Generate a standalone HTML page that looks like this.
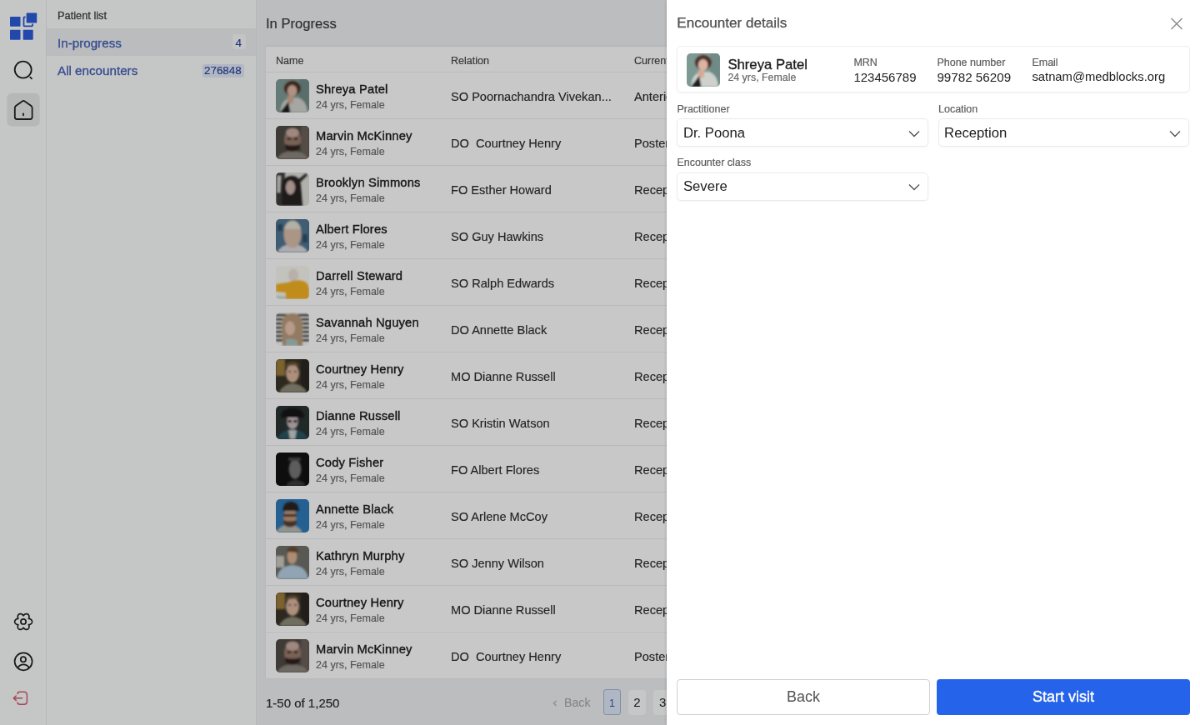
<!DOCTYPE html>
<html><head><meta charset="utf-8">
<style>
html,body{margin:0;padding:0;width:1200px;height:725px;overflow:hidden;background:#fff;}
*{box-sizing:border-box;}
#root{position:absolute;left:0;top:0;width:1440px;height:870px;transform:scale(0.8333333);will-change:transform;transform-origin:0 0;font-family:"Liberation Sans",sans-serif;color:#222;}
.abs{position:absolute;}
#rail{left:0;top:0;width:56px;height:870px;background:#f7f8f8;border-right:1px solid #e6e7e6;}
#panel{left:56px;top:0;width:252px;height:870px;background:#f7f8f8;border-right:1px solid #e6e7e7;}
#main{left:308px;top:0;width:1132px;height:870px;background:#ebedef;}
#overlay{left:0;top:0;width:1440px;height:870px;background:rgba(0,0,0,0.2);}
#modal{left:800px;top:0;width:640px;height:870px;background:#fff;box-shadow:-1px 0 3px rgba(0,0,0,0.12);}
.t{position:absolute;white-space:nowrap;line-height:1;}
.tbl{position:absolute;left:11px;top:56px;width:1200px;height:758.2px;background:#fafbfb;box-shadow:0 -1px 3px rgba(0,0,0,0.05);}
.th{position:absolute;top:0;left:0;right:0;height:30.7px;border-bottom:1px solid #e8e9e9;}
.th span{position:absolute;top:9.6px;font-size:12.5px;color:#4a4a4a;-webkit-text-stroke:0.2px #4a4a4a;}
.rows{position:absolute;top:30.7px;left:0;right:0;}
.row{position:relative;height:56px;border-bottom:1px solid #e8e9e9;}
.av{position:absolute;left:12px;top:8px;width:40px;height:40px;border-radius:5px;overflow:hidden;}
.av svg{display:block;}
.nm{position:absolute;left:60px;top:12.2px;font-size:14.7px;letter-spacing:0.2px;color:#1e1e1e;white-space:nowrap;-webkit-text-stroke:0.4px #1e1e1e;}
.sub{position:absolute;left:60px;top:32.2px;font-size:12.5px;color:#6e6e6e;white-space:nowrap;-webkit-text-stroke:0.2px #6e6e6e;}
.rel{position:absolute;left:222px;top:21.8px;font-size:14.6px;color:#2e2e2e;white-space:nowrap;-webkit-text-stroke:0.15px #2e2e2e;}
.cur{position:absolute;left:442px;top:21.8px;font-size:14.6px;color:#2e2e2e;white-space:nowrap;-webkit-text-stroke:0.15px #2e2e2e;}
.lbl{position:absolute;font-size:12.5px;color:#5e5e5e;white-space:nowrap;line-height:1;-webkit-text-stroke:0.2px #5e5e5e;}
.box{position:absolute;height:34px;border:1px solid #ececec;border-radius:5px;box-shadow:0 1px 2px rgba(0,0,0,0.04);}
.box span{position:absolute;left:6.5px;top:8.5px;font-size:16.7px;color:#222;line-height:1;}
.box svg{position:absolute;right:9px;top:11.8px;}
</style></head>
<body>
<svg width="0" height="0" style="position:absolute"><defs><filter id="bl" x="-20%" y="-20%" width="140%" height="140%"><feGaussianBlur stdDeviation="1.2"/></filter></defs></svg>
<div id="root">
  <div id="rail" class="abs">
    <svg class="abs" style="left:0;top:0" width="56" height="160" viewBox="0 0 56 160">
      <rect x="12" y="20" width="12.5" height="11.7" rx="0.8" fill="#2b5ad8"/>
      <rect x="12" y="35.8" width="12.5" height="12" rx="0.8" fill="#2b5ad8"/>
      <rect x="27.7" y="35.8" width="12" height="12" rx="0.8" fill="#2b5ad8"/>
      <rect x="28.5" y="20.5" width="10.5" height="10.8" rx="0.8" fill="none" stroke="#2b5ad8" stroke-width="1.8"/>
      <rect x="30.6" y="14.6" width="14.6" height="13.9" rx="1.2" fill="#f7f8f8"/>
      <rect x="31.6" y="15.6" width="12.6" height="11.9" rx="0.8" fill="#2b5ad8"/>
      <circle cx="27.7" cy="83.6" r="10" fill="none" stroke="#222" stroke-width="1.8"/>
      <line x1="36.2" y1="92.6" x2="38" y2="94.4" stroke="#222" stroke-width="1.8" stroke-linecap="round"/>
      <rect x="8.4" y="111.8" width="39.2" height="39.8" rx="6" fill="#e4e5e5"/>
      <path d="M17.8 129.5 L17.8 140.5 Q17.8 143 20.3 143 L36 143 Q38.6 143 38.6 140.5 L38.6 129.5 Q38.6 128 37.4 127 L29.6 121.4 Q28.2 120.5 26.8 121.4 L19 127 Q17.8 128 17.8 129.5 Z" fill="none" stroke="#222" stroke-width="1.8" stroke-linejoin="round"/>
      <line x1="28" y1="136.3" x2="28" y2="138.3" stroke="#222" stroke-width="1.8" stroke-linecap="round"/>
    </svg>
    <svg class="abs" style="left:0;top:720px" width="56" height="150" viewBox="0 720 56 150">
      <g fill="none" stroke="#222" stroke-width="1.7" stroke-linejoin="round">
        <path d="M38.50 746.00 L38.48 746.36 L38.41 746.72 L38.30 747.07 L38.15 747.41 L37.96 747.74 L37.73 748.05 L37.46 748.33 L37.16 748.60 L36.83 748.84 L36.48 749.05 L36.10 749.23 L35.69 749.38 L35.27 749.50 L34.83 749.58 L34.34 749.60 L34.56 750.04 L34.71 750.46 L34.82 750.89 L34.90 751.31 L34.93 751.73 L34.92 752.15 L34.88 752.55 L34.80 752.94 L34.69 753.32 L34.54 753.67 L34.35 754.00 L34.13 754.30 L33.88 754.57 L33.60 754.81 L33.30 755.01 L32.98 755.17 L32.63 755.29 L32.27 755.37 L31.90 755.41 L31.52 755.41 L31.14 755.36 L30.76 755.28 L30.38 755.15 L30.01 754.98 L29.65 754.78 L29.30 754.54 L28.97 754.27 L28.66 753.96 L28.37 753.61 L28.10 753.20 L27.83 753.61 L27.54 753.96 L27.23 754.27 L26.90 754.54 L26.55 754.78 L26.19 754.98 L25.82 755.15 L25.44 755.28 L25.06 755.36 L24.68 755.41 L24.30 755.41 L23.93 755.37 L23.57 755.29 L23.22 755.17 L22.90 755.01 L22.60 754.81 L22.32 754.57 L22.07 754.30 L21.85 754.00 L21.66 753.67 L21.51 753.32 L21.40 752.94 L21.32 752.55 L21.28 752.15 L21.27 751.73 L21.30 751.31 L21.38 750.89 L21.49 750.46 L21.64 750.04 L21.86 749.60 L21.37 749.58 L20.93 749.50 L20.51 749.38 L20.10 749.23 L19.72 749.05 L19.37 748.84 L19.04 748.60 L18.74 748.33 L18.47 748.05 L18.24 747.74 L18.05 747.41 L17.90 747.07 L17.79 746.72 L17.72 746.36 L17.70 746.00 L17.72 745.64 L17.79 745.28 L17.90 744.93 L18.05 744.59 L18.24 744.26 L18.47 743.95 L18.74 743.67 L19.04 743.40 L19.37 743.16 L19.72 742.95 L20.10 742.77 L20.51 742.62 L20.93 742.50 L21.37 742.42 L21.86 742.40 L21.64 741.96 L21.49 741.54 L21.38 741.11 L21.30 740.69 L21.27 740.27 L21.28 739.85 L21.32 739.45 L21.40 739.06 L21.51 738.68 L21.66 738.33 L21.85 738.00 L22.07 737.70 L22.32 737.43 L22.60 737.19 L22.90 736.99 L23.22 736.83 L23.57 736.71 L23.93 736.63 L24.30 736.59 L24.68 736.59 L25.06 736.64 L25.44 736.72 L25.82 736.85 L26.19 737.02 L26.55 737.22 L26.90 737.46 L27.23 737.73 L27.54 738.04 L27.83 738.39 L28.10 738.80 L28.37 738.39 L28.66 738.04 L28.97 737.73 L29.30 737.46 L29.65 737.22 L30.01 737.02 L30.38 736.85 L30.76 736.72 L31.14 736.64 L31.52 736.59 L31.90 736.59 L32.27 736.63 L32.63 736.71 L32.98 736.83 L33.30 736.99 L33.60 737.19 L33.88 737.43 L34.13 737.70 L34.35 738.00 L34.54 738.33 L34.69 738.68 L34.80 739.06 L34.88 739.45 L34.92 739.85 L34.93 740.27 L34.90 740.69 L34.82 741.11 L34.71 741.54 L34.56 741.96 L34.34 742.40 L34.83 742.42 L35.27 742.50 L35.69 742.62 L36.10 742.77 L36.48 742.95 L36.83 743.16 L37.16 743.40 L37.46 743.67 L37.73 743.95 L37.96 744.26 L38.15 744.59 L38.30 744.93 L38.41 745.28 L38.48 745.64 Z"/>
        <circle cx="28.0" cy="745.9" r="3.1"/>
      </g>
      <g fill="none" stroke="#222" stroke-width="1.7">
        <circle cx="28.1" cy="793.8" r="10.5"/>
        <circle cx="27.9" cy="791.3" r="3.1"/>
        <path d="M21.2 801.2 Q24 797.4 28.1 797.4 Q32.2 797.4 35 801.2"/>
      </g>
      <g fill="none" stroke="#cf5a6c" stroke-width="1.5" stroke-linecap="round" stroke-linejoin="round">
        <path d="M21 832.5 Q21 830.2 24 830.2 L28.6 830.2 Q32.4 830.2 32.4 834 L32.4 841.4 Q32.4 845.2 28.6 845.2 L24 845.2 Q21 845.2 21 843"/>
        <path d="M26.5 837.7 L16.2 837.7 M19.2 835 L16.2 837.7 L19.2 840.4"/>
      </g>
    </svg>
  </div>

  <div id="panel" class="abs">
    <div class="t" style="left:13px;top:12.6px;font-size:12.8px;color:#444;-webkit-text-stroke:0.3px #444;">Patient list</div>
    <div class="abs" style="left:0;top:33.5px;width:251px;height:33.5px;background:#e9ecee;"></div>
    <div class="t" style="left:13px;top:44px;font-size:15.2px;color:#4460b4;-webkit-text-stroke:0.3px #4460b4;">In-progress</div>
    <div class="abs" style="left:223px;top:41.4px;width:15.7px;height:17.4px;background:#f4f6f6;border-radius:3px;"></div>
    <div class="t" style="left:226.5px;top:44.5px;font-size:13.4px;color:#2e4a99;-webkit-text-stroke:0.2px #2e4a99;">4</div>
    <div class="t" style="left:13px;top:77.3px;font-size:15.2px;color:#4460b4;-webkit-text-stroke:0.3px #4460b4;">All encounters</div>
    <div class="abs" style="left:186.6px;top:76.7px;width:50.4px;height:16.2px;background:#dfe5f5;border-radius:3px;"></div>
    <div class="t" style="left:189px;top:78px;font-size:13.4px;color:#2e4a99;-webkit-text-stroke:0.2px #2e4a99;">276848</div>
  </div>

  <div id="main" class="abs">
    <div class="t" style="left:11px;top:21.3px;font-size:16.6px;color:#3e3e3e;-webkit-text-stroke:0.2px #3e3e3e;">In Progress</div>
    <div class="tbl">
      <div class="th"><span style="left:12px">Name</span><span style="left:222px">Relation</span><span style="left:442px">Current</span></div>
      <div class="rows">
<div class="row"><div class="av"><svg viewBox="0 0 40 40" width="40" height="40"><rect width="40" height="40" fill="#7d9994"/><g filter="url(#bl)">
<rect x="28" y="0" width="12" height="40" fill="#6f8a86"/>
<path d="M5 40 Q6 25 16 23 L26 22 Q37 25 38 40 Z" fill="#cfd1cc"/>
<path d="M13 22 Q16 18 21 21 L21 28 L15 30 Z" fill="#d6aa94"/>
<ellipse cx="20" cy="11" rx="10" ry="9" fill="#4e3228"/>
<ellipse cx="19.6" cy="14" rx="5.8" ry="7" fill="#dcb4a2"/>
<path d="M5 40 L15 27 L17.5 40 Z" fill="#1c1c1c"/>
</g></svg></div><div class="nm">Shreya Patel</div><div class="sub">24 yrs, Female</div><div class="rel">SO Poornachandra Vivekan...</div><div class="cur">Anterior chamber</div></div>
<div class="row"><div class="av"><svg viewBox="0 0 40 40" width="40" height="40"><rect width="40" height="40" fill="#4e4a44"/><g filter="url(#bl)">
<rect x="30" y="0" width="10" height="40" fill="#6a5f58"/>
<path d="M2 40 Q4 31 20 30 Q36 31 38 40 Z" fill="#8a847c"/>
<ellipse cx="20" cy="17" rx="10" ry="14" fill="#9a7a6c"/>
<ellipse cx="20" cy="8" rx="8" ry="5.5" fill="#c8aaa0"/>
<ellipse cx="16" cy="15.5" rx="2.6" ry="1.6" fill="#3a2a24"/>
<ellipse cx="24" cy="15.5" rx="2.6" ry="1.6" fill="#3a2a24"/>
<path d="M11 22 Q20 25 29 22 L28 28 Q20 34 12 28 Z" fill="#2e221e"/>
</g></svg></div><div class="nm">Marvin McKinney</div><div class="sub">24 yrs, Female</div><div class="rel">DO&nbsp; Courtney Henry</div><div class="cur">Posterior</div></div>
<div class="row"><div class="av"><svg viewBox="0 0 40 40" width="40" height="40"><rect width="40" height="40" fill="#dcdcd8"/><g filter="url(#bl)">
<path d="M0 0 L11 0 L9 40 L0 40 Z" fill="#3a3a3a"/>
<path d="M2 4 L6 4 L5 24 L2 24 Z" fill="#d8d8d4"/>
<path d="M26 9 L36 1 L38 3 L29 12 Z" fill="#2a2a2a"/>
<path d="M8 15 Q9 4 19 4 Q29 4 30 16 L32 40 L7 40 Z" fill="#262020"/>
<ellipse cx="17.5" cy="18" rx="5.6" ry="8.5" fill="#cdb2aa"/>
</g></svg></div><div class="nm">Brooklyn Simmons</div><div class="sub">24 yrs, Female</div><div class="rel">FO Esther Howard</div><div class="cur">Reception</div></div>
<div class="row"><div class="av"><svg viewBox="0 0 40 40" width="40" height="40"><rect width="40" height="40" fill="#4a6e88"/><g filter="url(#bl)">
<rect x="0" y="0" width="40" height="40" fill="#4f7490"/>
<rect x="2" y="6" width="6" height="8" fill="#2e5068"/>
<rect x="32" y="18" width="6" height="10" fill="#2e5068"/>
<path d="M2 40 Q6 30 20 30 Q34 30 38 40 Z" fill="#d8d8dc"/>
<ellipse cx="20" cy="18" rx="10.5" ry="16.5" fill="#d6bca8"/>
<path d="M10 12 Q12 2 20 2 Q28 2 30 12 Z" fill="#e0ddd0"/>
</g></svg></div><div class="nm">Albert Flores</div><div class="sub">24 yrs, Female</div><div class="rel">SO Guy Hawkins</div><div class="cur">Reception</div></div>
<div class="row"><div class="av"><svg viewBox="0 0 40 40" width="40" height="40"><rect width="40" height="40" fill="#f4f4ee"/><g filter="url(#bl)">
<ellipse cx="21" cy="11" rx="6" ry="7.5" fill="#e8dcd4"/>
<path d="M0 22 L14 20 Q22 16 32 18 Q40 20 40 30 L40 40 L12 40 L12 32 L0 31 Z" fill="#f0b020"/>
<rect x="0" y="36" width="12" height="4" fill="#cfd8d0"/>
</g></svg></div><div class="nm">Darrell Steward</div><div class="sub">24 yrs, Female</div><div class="rel">SO Ralph Edwards</div><div class="cur">Reception</div></div>
<div class="row"><div class="av"><svg viewBox="0 0 40 40" width="40" height="40"><rect width="40" height="40" fill="#f2f4f0"/><g filter="url(#bl)">
<rect x="0" y="2" width="40" height="2.4" fill="#3a3a3a"/>
<rect x="0" y="7" width="40" height="2.4" fill="#3a3a3a"/>
<rect x="0" y="12" width="40" height="2.4" fill="#3a3a3a"/>
<rect x="0" y="17" width="40" height="2.4" fill="#3a3a3a"/>
<rect x="0" y="22" width="40" height="2.4" fill="#3a3a3a"/>
<rect x="0" y="27" width="40" height="2.4" fill="#3a3a3a"/>
<rect x="0" y="32" width="40" height="2.4" fill="#3a3a3a"/>
<path d="M7 14 Q8 1 20 1 Q31 1 32 14 L32 40 L8 40 Z" fill="#b89a7a"/>
<ellipse cx="17" cy="19" rx="6" ry="8.5" fill="#e6c2ae"/>
<path d="M12 32 Q20 30 26 34 L26 40 L12 40 Z" fill="#a8c0b8"/>
</g></svg></div><div class="nm">Savannah Nguyen</div><div class="sub">24 yrs, Female</div><div class="rel">DO Annette Black</div><div class="cur">Reception</div></div>
<div class="row"><div class="av"><svg viewBox="0 0 40 40" width="40" height="40"><rect width="40" height="40" fill="#3a3428"/><g filter="url(#bl)">
<rect x="0" y="0" width="11" height="20" fill="#9a7c3a"/>
<rect x="30" y="0" width="10" height="40" fill="#2a2622"/>
<path d="M4 40 Q8 30 20 29 Q32 30 37 40 Z" fill="#8e8a78"/>
<ellipse cx="20" cy="17" rx="8" ry="11" fill="#d8b49c"/>
<path d="M11 10 Q12 3 20 3 Q28 3 29 10 L28 8 Q20 6 12 9 Z" fill="#6a5236"/>
<rect x="15" y="14" width="3" height="1.6" fill="#5a3a2e"/>
<rect x="22" y="14" width="3" height="1.6" fill="#5a3a2e"/>
</g></svg></div><div class="nm">Courtney Henry</div><div class="sub">24 yrs, Female</div><div class="rel">MO Dianne Russell</div><div class="cur">Reception</div></div>
<div class="row"><div class="av"><svg viewBox="0 0 40 40" width="40" height="40"><rect width="40" height="40" fill="#2a3232"/><g filter="url(#bl)">
<path d="M2 40 Q5 29 20 28 Q35 29 38 40 Z" fill="#2a5560"/>
<path d="M15 29 L25 29 L23 40 L17 40 Z" fill="#c8cccc"/>
<ellipse cx="20" cy="19" rx="7" ry="9" fill="#c8b8bc"/>
<path d="M6 12 Q8 3 20 3 Q32 3 34 12 L34 14 L6 14 Z" fill="#141414"/>
<ellipse cx="16.5" cy="18.5" rx="2.6" ry="1.8" fill="#1e1616"/>
<ellipse cx="23.5" cy="18.5" rx="2.6" ry="1.8" fill="#1e1616"/>
</g></svg></div><div class="nm">Dianne Russell</div><div class="sub">24 yrs, Female</div><div class="rel">SO Kristin Watson</div><div class="cur">Reception</div></div>
<div class="row"><div class="av"><svg viewBox="0 0 40 40" width="40" height="40"><rect width="40" height="40" fill="#121212"/><g filter="url(#bl)">
<path d="M12 40 Q15 33 24 33 Q33 33 36 40 Z" fill="#3a3a3a"/>
<ellipse cx="23" cy="20" rx="7.5" ry="11.5" fill="#747474"/>
<rect x="15" y="6" width="15" height="4" fill="#4a4a4a"/>
</g></svg></div><div class="nm">Cody Fisher</div><div class="sub">24 yrs, Female</div><div class="rel">FO Albert Flores</div><div class="cur">Reception</div></div>
<div class="row"><div class="av"><svg viewBox="0 0 40 40" width="40" height="40"><rect width="40" height="40" fill="#2f78b8"/><g filter="url(#bl)">
<path d="M0 40 Q4 31 16 30 Q28 31 32 40 Z" fill="#b8b8b0"/>
<ellipse cx="17" cy="22" rx="8" ry="11" fill="#c0987e"/>
<path d="M8 14 Q9 3 18 3 Q27 3 28 14 Z" fill="#2a2420"/>
<path d="M9 25 Q17 28 25 25 L24 31 Q17 36 10 31 Z" fill="#5a3a30"/>
<rect x="9" y="18" width="16" height="3" fill="#4a3028"/>
</g></svg></div><div class="nm">Annette Black</div><div class="sub">24 yrs, Female</div><div class="rel">SO Arlene McCoy</div><div class="cur">Reception</div></div>
<div class="row"><div class="av"><svg viewBox="0 0 40 40" width="40" height="40"><rect width="40" height="40" fill="#707068"/><g filter="url(#bl)">
<rect x="0" y="12" width="10" height="14" fill="#c8c8c0"/>
<path d="M1 40 Q3 24 20 23 Q37 24 39 40 Z" fill="#b4cee0"/>
<ellipse cx="19.5" cy="13" rx="6" ry="9" fill="#dab090"/>
<path d="M13 7 Q14 1 20 1 Q27 1 27 8 Z" fill="#6a4a36"/>
</g></svg></div><div class="nm">Kathryn Murphy</div><div class="sub">24 yrs, Female</div><div class="rel">SO Jenny Wilson</div><div class="cur">Reception</div></div>
<div class="row"><div class="av"><svg viewBox="0 0 40 40" width="40" height="40"><rect width="40" height="40" fill="#3a3428"/><g filter="url(#bl)">
<rect x="0" y="0" width="11" height="20" fill="#9a7c3a"/>
<rect x="30" y="0" width="10" height="40" fill="#2a2622"/>
<path d="M4 40 Q8 30 20 29 Q32 30 37 40 Z" fill="#8e8a78"/>
<ellipse cx="20" cy="17" rx="8" ry="11" fill="#d8b49c"/>
<path d="M11 10 Q12 3 20 3 Q28 3 29 10 L28 8 Q20 6 12 9 Z" fill="#6a5236"/>
<rect x="15" y="14" width="3" height="1.6" fill="#5a3a2e"/>
<rect x="22" y="14" width="3" height="1.6" fill="#5a3a2e"/>
</g></svg></div><div class="nm">Courtney Henry</div><div class="sub">24 yrs, Female</div><div class="rel">MO Dianne Russell</div><div class="cur">Reception</div></div>
<div class="row"><div class="av"><svg viewBox="0 0 40 40" width="40" height="40"><rect width="40" height="40" fill="#4e4a44"/><g filter="url(#bl)">
<rect x="30" y="0" width="10" height="40" fill="#6a5f58"/>
<path d="M2 40 Q4 31 20 30 Q36 31 38 40 Z" fill="#8a847c"/>
<ellipse cx="20" cy="17" rx="10" ry="14" fill="#9a7a6c"/>
<ellipse cx="20" cy="8" rx="8" ry="5.5" fill="#c8aaa0"/>
<ellipse cx="16" cy="15.5" rx="2.6" ry="1.6" fill="#3a2a24"/>
<ellipse cx="24" cy="15.5" rx="2.6" ry="1.6" fill="#3a2a24"/>
<path d="M11 22 Q20 25 29 22 L28 28 Q20 34 12 28 Z" fill="#2e221e"/>
</g></svg></div><div class="nm">Marvin McKinney</div><div class="sub">24 yrs, Female</div><div class="rel">DO&nbsp; Courtney Henry</div><div class="cur">Posterior</div></div>
      </div>
    </div>
    <div class="t" style="left:11px;top:836px;font-size:15px;color:#2e2e2e;-webkit-text-stroke:0.2px #2e2e2e;">1-50 of 1,250</div>
    <svg class="abs" style="left:354px;top:838.5px" width="8" height="10" viewBox="0 0 8 10"><path d="M5.5 2 L2.5 5 L5.5 8" fill="none" stroke="#b0b0b0" stroke-width="1.3"/></svg>
    <div class="t" style="left:369px;top:836px;font-size:14.2px;color:#a4a4a4;">Back</div>
    <div class="abs" style="left:416px;top:827px;width:21px;height:31px;background:#dde5f6;border:1px solid #a6b4d0;border-radius:3px;"></div>
    <div class="t" style="left:416px;top:837.5px;width:21px;text-align:center;font-size:12.5px;color:#3a55a0;">1</div>
    <div class="abs" style="left:446px;top:828.4px;width:21px;height:29.2px;background:#f8f9f9;border-radius:4px;"></div>
    <div class="t" style="left:445.8px;top:835px;width:21px;text-align:center;font-size:15px;color:#222;">2</div>
    <div class="abs" style="left:476px;top:828.4px;width:21px;height:29.2px;background:#f8f9f9;border-radius:4px;"></div>
    <div class="t" style="left:476.6px;top:835px;width:21px;text-align:center;font-size:15px;color:#222;">3</div>
  </div>

  <div id="overlay" class="abs"></div>

  <div id="modal" class="abs">
    <div class="t" style="left:12.3px;top:19.3px;font-size:17.1px;color:#505050;-webkit-text-stroke:0.25px #505050;">Encounter details</div>
    <svg class="abs" style="left:604px;top:21px" width="16" height="15" viewBox="0 0 16 15"><path d="M1.5 1 L14.5 14 M14.5 1 L1.5 14" stroke="#8a8a8a" stroke-width="1.4" fill="none"/></svg>
    <div class="abs" style="left:12.4px;top:55px;width:615.4px;height:56.4px;border:1px solid #efefef;border-radius:5px;box-shadow:0 1px 2px rgba(0,0,0,0.04);">
      <div class="av" style="left:11px;top:8px;"><svg viewBox="0 0 40 40" width="40" height="40"><rect width="40" height="40" fill="#7d9994"/><g filter="url(#bl)">
<rect x="28" y="0" width="12" height="40" fill="#6f8a86"/>
<path d="M5 40 Q6 25 16 23 L26 22 Q37 25 38 40 Z" fill="#cfd1cc"/>
<path d="M13 22 Q16 18 21 21 L21 28 L15 30 Z" fill="#d6aa94"/>
<ellipse cx="20" cy="11" rx="10" ry="9" fill="#4e3228"/>
<ellipse cx="19.6" cy="14" rx="5.8" ry="7" fill="#dcb4a2"/>
<path d="M5 40 L15 27 L17.5 40 Z" fill="#1c1c1c"/>
</g></svg></div>
      <div class="t" style="left:60px;top:14.3px;font-size:16.7px;color:#1e1e1e;-webkit-text-stroke:0.35px #1e1e1e;">Shreya Patel</div>
      <div class="t" style="left:60px;top:30.8px;font-size:12.4px;color:#666;-webkit-text-stroke:0.15px #666;">24 yrs, Female</div>
      <div class="t" style="left:211px;top:13px;font-size:12.5px;color:#5e5e5e;-webkit-text-stroke:0.2px #5e5e5e;">MRN</div>
      <div class="t" style="left:211px;top:28.8px;font-size:15px;color:#222;">123456789</div>
      <div class="t" style="left:311px;top:13px;font-size:12.5px;color:#5e5e5e;-webkit-text-stroke:0.2px #5e5e5e;">Phone number</div>
      <div class="t" style="left:311px;top:28.8px;font-size:15.2px;color:#222;">99782 56209</div>
      <div class="t" style="left:425px;top:13px;font-size:12.5px;color:#5e5e5e;-webkit-text-stroke:0.2px #5e5e5e;">Email</div>
      <div class="t" style="left:425px;top:28.8px;font-size:14.8px;color:#222;">satnam@medblocks.org</div>
    </div>
    <div class="lbl" style="left:12.4px;top:125.2px;">Practitioner</div>
    <div class="box" style="left:12.4px;top:141.5px;width:301.2px;"><span style="top:9.5px">Dr. Poona</span>
      <svg style="top:13.8px" width="14" height="9" viewBox="0 0 14 9"><path d="M1 1.5 L7 7.5 L13 1.5" fill="none" stroke="#555" stroke-width="1.4"/></svg></div>
    <div class="lbl" style="left:326px;top:125.2px;">Location</div>
    <div class="box" style="left:325.6px;top:141.6px;width:301.8px;"><span style="top:9.1px">Reception</span>
      <svg style="top:13.8px" width="14" height="9" viewBox="0 0 14 9"><path d="M1 1.5 L7 7.5 L13 1.5" fill="none" stroke="#555" stroke-width="1.4"/></svg></div>
    <div class="lbl" style="left:12.4px;top:189px;">Encounter class</div>
    <div class="box" style="left:12.4px;top:207px;width:301.2px;"><span style="top:8px">Severe</span>
      <svg width="14" height="9" viewBox="0 0 14 9"><path d="M1 1.5 L7 7.5 L13 1.5" fill="none" stroke="#555" stroke-width="1.4"/></svg></div>

    <div class="abs" style="left:12.4px;top:815px;width:303.6px;height:42.5px;border:1px solid #cfcfcf;border-radius:4px;"></div>
    <div class="t" style="left:0;top:827px;width:328px;text-align:center;font-size:18px;color:#555;">Back</div>
    <div class="abs" style="left:324.2px;top:815.3px;width:303.8px;height:42.5px;background:#2563eb;border-radius:4px;"></div>
    <div class="t" style="left:324.2px;top:826.8px;width:303.8px;text-align:center;font-size:18px;color:#fff;-webkit-text-stroke:0.4px #fff;">Start visit</div>
  </div>
</div>
</body></html>
